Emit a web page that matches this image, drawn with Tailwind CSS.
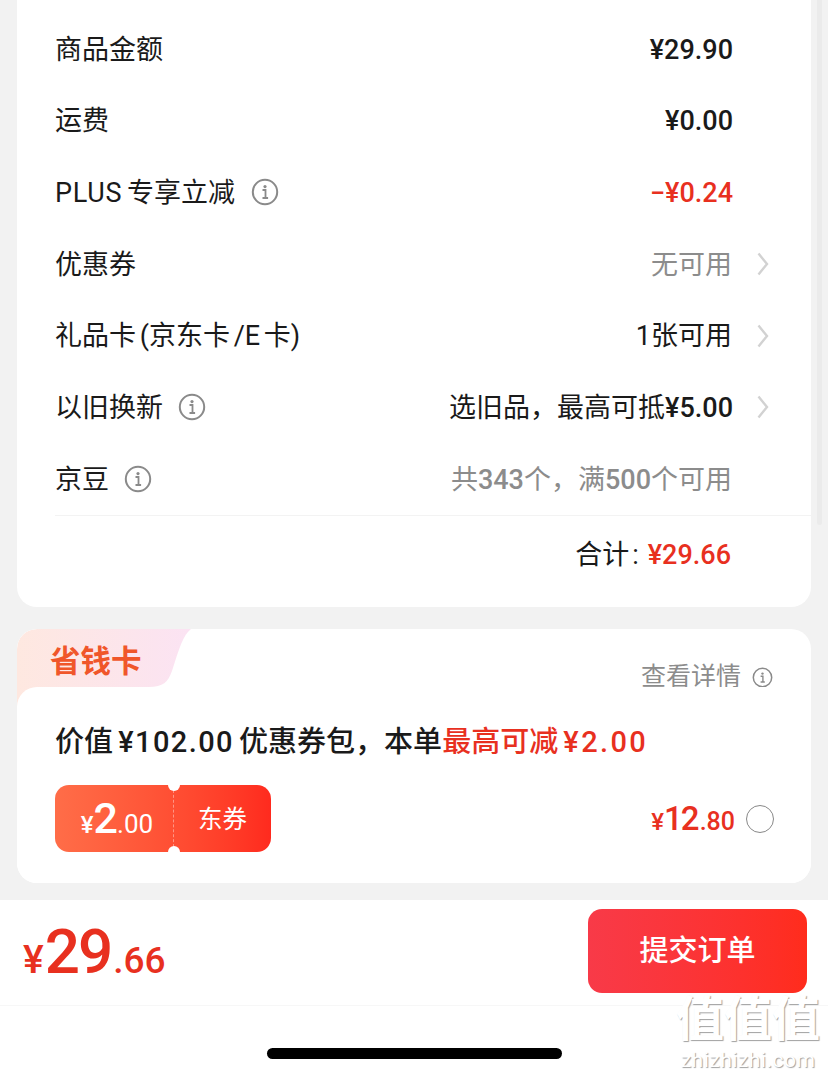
<!DOCTYPE html>
<html lang="zh">
<head>
  <meta charset="utf-8"/>
  <meta name="viewport" content="width=device-width, initial-scale=1.0"/>
  <title>确认订单</title>
  <script src="https://cdn.jsdelivr.net/npm/@tailwindcss/browser@4"></script>
</head>
<body class="bg-[#f2f2f2]">
  <div class="relative w-[828px] h-[1077px] overflow-hidden bg-[#f2f2f2] text-[#1a1a1a] font-['Roboto','Noto_Sans_CJK_SC',sans-serif]">
    <!-- 滚动条 -->
    <div class="absolute right-[6px] -top-[10px] w-[5px] h-[535px] rounded-full bg-[#ebebeb]"></div>

    <!-- 金额明细 -->
    <div class="relative ml-[17px] w-[794px] h-[627px] -mt-[20px] pt-[34.3px] bg-white rounded-[20px] text-[27px] leading-[41px]">
      <div class="flex items-center justify-between h-[71.67px] pl-[38px] pr-[78px]">
        <span>商品金额</span>
        <span class="font-medium">¥29.90</span>
      </div>
      <div class="flex items-center justify-between h-[71.67px] pl-[38px] pr-[78px]">
        <span>运费</span>
        <span class="font-medium">¥0.00</span>
      </div>
      <div class="flex items-center justify-between h-[71.67px] pl-[38px] pr-[78px]">
        <span class="flex items-center gap-[16px]"><span class="[word-spacing:-2px]"><span class="tracking-[0.7px]">PLUS</span> 专享立减</span>
          <svg class="w-[28px] h-[28px] -mt-[2px]" viewBox="0 0 28 28" fill="none"><circle cx="14" cy="14" r="12.2" stroke="#8a8a8a" stroke-width="2"/><circle cx="14" cy="8.6" r="1.6" fill="#8a8a8a"/><path d="M11.5 12h3v7.6M11.5 20h5.6" stroke="#8a8a8a" stroke-width="1.8"/></svg>
        </span>
        <span class="font-medium text-[#e8301f]">−¥0.24</span>
      </div>
      <div class="flex items-center justify-between h-[71.67px] pl-[38px] pr-[42px]">
        <span>优惠券</span>
        <span class="flex items-center gap-[25px] text-[#8c8c8c]">无可用
          <svg class="w-[12px] h-[24px] -mt-[2px]" viewBox="0 0 12 24" fill="none"><path d="M1.5 1.5l8.5 10.5-8.5 10.5" stroke="#d2d2d2" stroke-width="2.4"/></svg>
        </span>
      </div>
      <div class="flex items-center justify-between h-[71.67px] pl-[38px] pr-[42px]">
        <span class="[word-spacing:-3px]">礼品卡 (京东卡 /E 卡)</span>
        <span class="flex items-center gap-[25px]">1张可用
          <svg class="w-[12px] h-[24px] -mt-[2px]" viewBox="0 0 12 24" fill="none"><path d="M1.5 1.5l8.5 10.5-8.5 10.5" stroke="#d2d2d2" stroke-width="2.4"/></svg>
        </span>
      </div>
      <div class="flex items-center justify-between h-[71.67px] pl-[38px] pr-[42px]">
        <span class="flex items-center gap-[15px]">以旧换新
          <svg class="w-[28px] h-[28px] -mt-[2px]" viewBox="0 0 28 28" fill="none"><circle cx="14" cy="14" r="12.2" stroke="#8a8a8a" stroke-width="2"/><circle cx="14" cy="8.6" r="1.6" fill="#8a8a8a"/><path d="M11.5 12h3v7.6M11.5 20h5.6" stroke="#8a8a8a" stroke-width="1.8"/></svg>
        </span>
        <span class="flex items-center gap-[24px]"><span>选旧品&#xFF0C;最高可抵<span class="font-medium">¥5.00</span></span>
          <svg class="w-[12px] h-[24px] -mt-[2px]" viewBox="0 0 12 24" fill="none"><path d="M1.5 1.5l8.5 10.5-8.5 10.5" stroke="#d2d2d2" stroke-width="2.4"/></svg>
        </span>
      </div>
      <div class="flex items-center justify-between h-[71.67px] pl-[38px] pr-[79px]">
        <span class="flex items-center gap-[15px]">京豆
          <svg class="w-[28px] h-[28px] -mt-[2px]" viewBox="0 0 28 28" fill="none"><circle cx="14" cy="14" r="12.2" stroke="#8a8a8a" stroke-width="2"/><circle cx="14" cy="8.6" r="1.6" fill="#8a8a8a"/><path d="M11.5 12h3v7.6M11.5 20h5.6" stroke="#8a8a8a" stroke-width="1.8"/></svg>
        </span>
        <span class="text-[#8c8c8c]">共<span class="font-medium">343</span>个&#xFF0C;满<span class="font-medium">500</span>个可用</span>
      </div>
      <div class="ml-[38px] -mt-[1px] flex items-center justify-end h-[80px] pt-[1px] border-t border-[#f3f3f3] pr-[80px]">
        <span>合计</span><span class="ml-[3px] mr-[9px]">:</span><span class="font-medium text-[#e8301f]">¥29.66</span>
      </div>
    </div>

    <!-- 省钱卡 -->
    <div class="relative ml-[17px] mt-[22px] w-[794px] h-[254px] bg-white rounded-[20px] overflow-hidden">
      <div class="flex items-end justify-between h-[58px]">
        <div class="relative w-[175px] h-[58px]">
          <svg class="absolute left-0 top-0 w-[175px] h-[80px]" viewBox="0 0 175 80" fill="none">
            <defs><linearGradient id="tab" x1="0" y1="0" x2="1" y2="0"><stop offset="0" stop-color="#fee8e0"/><stop offset="1" stop-color="#fbe3f3"/></linearGradient></defs>
            <path d="M0 80V20A20 20 0 0 1 20 0H174C166 6 162 20 155 42C151 53 146 58 132 58H20V80Z" fill="url(#tab)"/>
          </svg>
          <span class="absolute left-[33px] top-[11px] text-[30.5px] leading-[44px] font-bold text-[#f0562a]">省钱卡</span>
        </div>
        <div class="flex items-center gap-[11px] pr-[38px] -mb-[7px] text-[25px] leading-[34px] text-[#8c8c8c]">查看详情
          <svg class="w-[21px] h-[21px]" viewBox="0 0 21 21" fill="none"><circle cx="10.5" cy="10.5" r="9.2" stroke="#8a8a8a" stroke-width="1.5"/><circle cx="10.5" cy="6.6" r="1.2" fill="#8a8a8a"/><path d="M8.6 9.2h2.3v5.4M8.6 15h4.2" stroke="#8a8a8a" stroke-width="1.4"/></svg>
        </div>
      </div>
      <div class="relative h-[196px] bg-white rounded-tl-[20px] pl-[38px] pr-[37px] pt-[37px]">
        <div class="text-[29px] leading-[36px] font-medium [word-spacing:-2px] whitespace-nowrap">价值 <span class="tracking-[1.4px]">¥102.00</span> 优惠券包&#xFF0C;本单<span class="text-[#e8301f]">最高可减 <span class="tracking-[2.4px]">¥2.00</span></span></div>
        <div class="flex items-center justify-between mt-[25px]">
          <div class="relative flex w-[216px] h-[67px] rounded-[14px] bg-gradient-to-r from-[#ff6d48] to-[#ff2a1e] text-white">
            <div class="flex items-baseline justify-center w-[119px] pt-[8px] pl-[6px] border-r border-dashed border-white/40 leading-[50px]">
              <span class="text-[24px] font-medium">¥</span><span class="text-[43px] font-medium tracking-[-1px]">2</span><span class="text-[26px]">.00</span>
            </div>
            <div class="flex-1 flex items-center justify-center pt-[3px] text-[24.5px]">东券</div>
            <span class="absolute left-[113px] -top-[6px] w-[12px] h-[12px] rounded-full bg-white"></span>
            <span class="absolute left-[113px] -bottom-[6px] w-[12px] h-[12px] rounded-full bg-white"></span>
          </div>
          <div class="flex items-center gap-[11px] text-[#e8301f]">
            <span class="flex items-baseline font-medium leading-[40px] mt-[4px]"><span class="text-[24px]">¥</span><span class="text-[33px] tracking-[-2px]">12</span><span class="text-[25px] ml-[2px]">.80</span></span>
            <span class="w-[28px] h-[28px] rounded-full border border-[#888888]"></span>
          </div>
        </div>
      </div>
    </div>

    <!-- 底部提交栏 -->
    <div class="relative mt-[17px] h-[177px] bg-white">
      <div class="flex items-center justify-between h-[106px] pl-[23px] pr-[21px] border-b border-[#f7f7f7]">
        <div class="flex items-baseline text-[#e8301f] font-medium mt-[2px]">
          <span class="text-[39px] mr-[1px]">¥</span><span class="text-[62px] leading-[70px] tracking-[-2px]">29</span><span class="text-[37px] ml-[2px]">.66</span>
        </div>
        <div class="flex items-center justify-center w-[219px] h-[84px] mb-[4px] pt-[2px] rounded-[14px] bg-gradient-to-r from-[#f83a48] to-[#ff2c1c] text-white text-[29px] font-medium">提交订单</div>
      </div>
      <div class="flex justify-center pt-[42px]">
        <div class="w-[295px] h-[11px] rounded-full bg-black"></div>
      </div>
    </div>

    <!-- 水印 -->
    <div class="absolute left-[676px] top-[992px] w-[144px] text-center text-white [text-shadow:1px_1px_1px_#a0a0a0]">
      <div class="text-[48px] leading-[56px] font-bold">值值值</div>
      <div class="text-[21px] leading-[24px] tracking-[0.5px]">zhizhizhi.com</div>
    </div>
  </div>
</body>
</html>
